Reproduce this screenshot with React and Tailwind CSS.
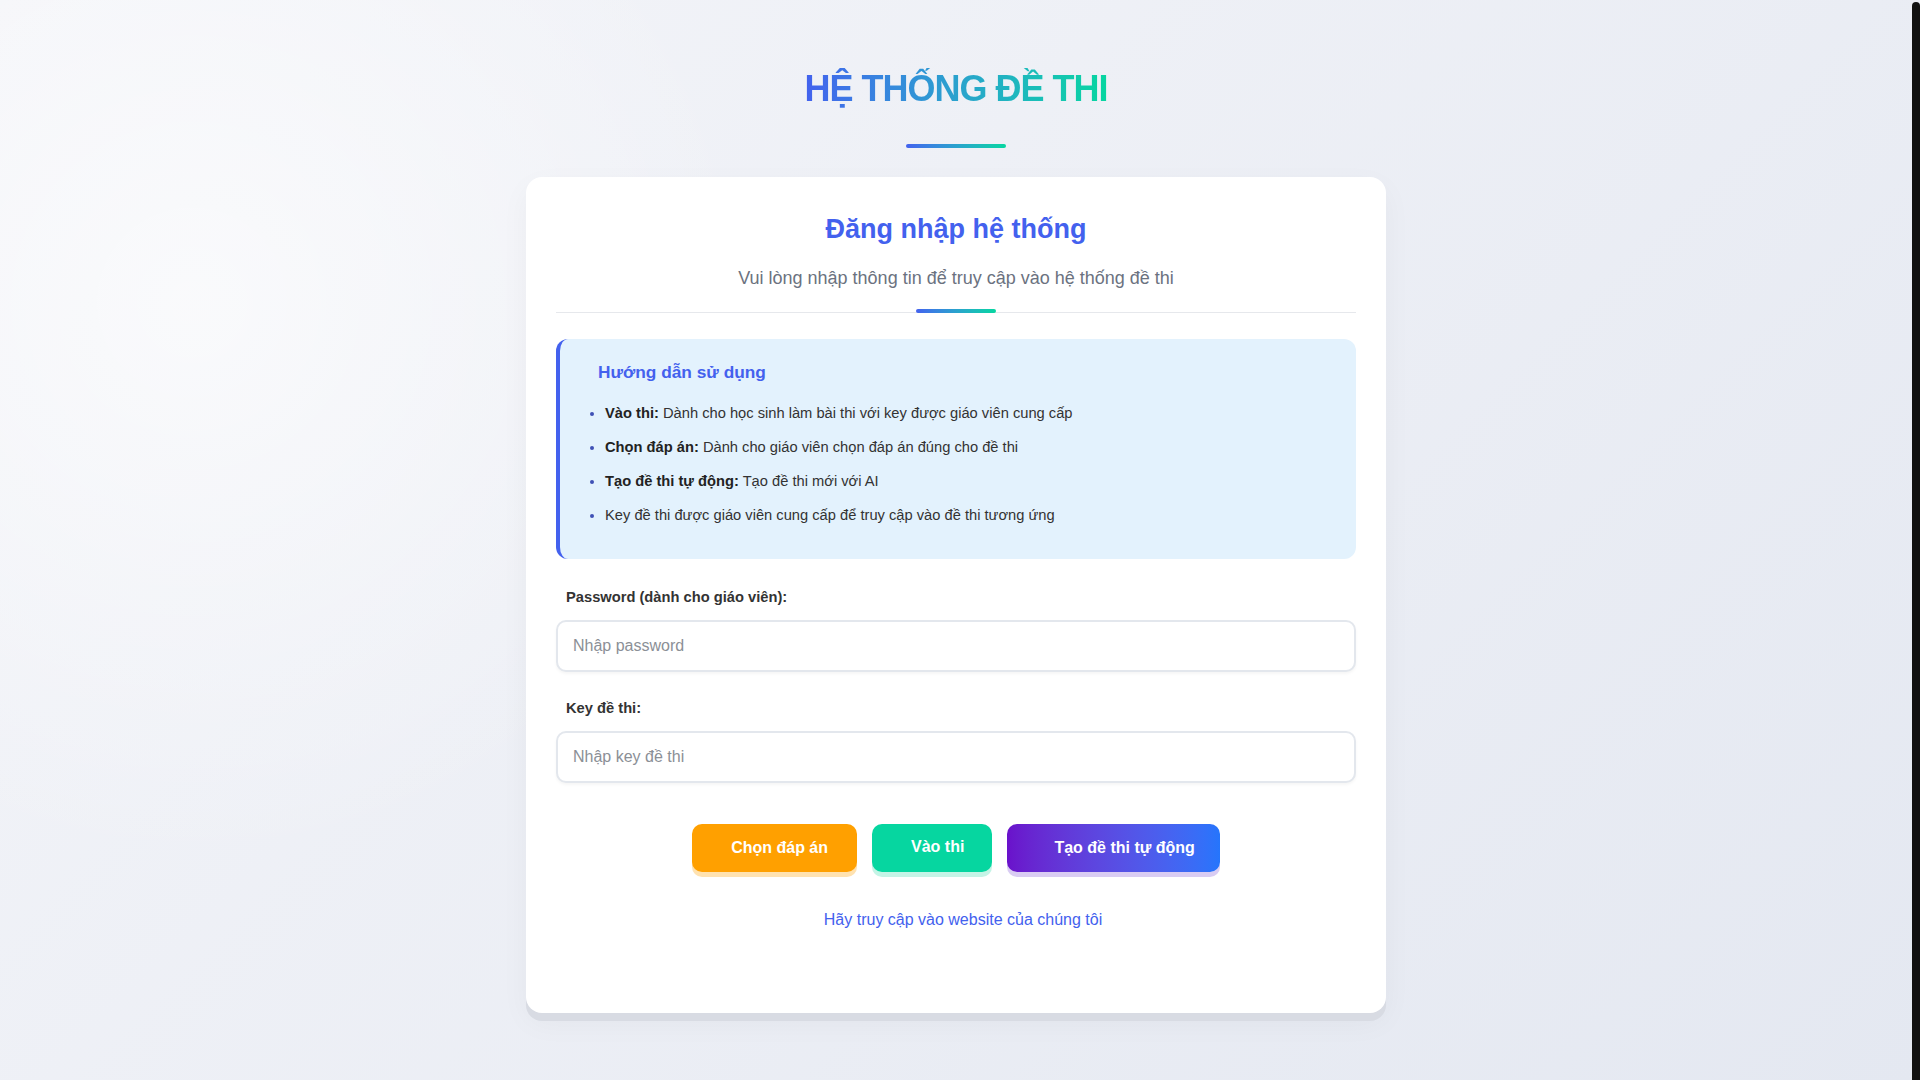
import { useState } from 'react'

const guide = [
  { b: 'Vào thi:', t: ' Dành cho học sinh làm bài thi với key được giáo viên cung cấp' },
  { b: 'Chọn đáp án:', t: ' Dành cho giáo viên chọn đáp án đúng cho đề thi' },
  { b: 'Tạo đề thi tự động:', t: ' Tạo đề thi mới với AI' },
  { b: '', t: 'Key đề thi được giáo viên cung cấp để truy cập vào đề thi tương ứng' },
]

const inputCls = 'w-full h-[52px] rounded-[10px] border-2 border-[#e3e7ed] bg-white px-[15px] text-[16px] text-[#333] placeholder:text-[#8b8f96] shadow-[0_2px_3px_rgba(0,0,0,0.04)] focus:outline-none focus:border-[#4361ee]'
const labelCls = 'block pl-[10px] text-[14.7px] leading-[20px] font-bold text-[#333]'

export default function App() {
  const [password, setPassword] = useState('')
  const [examKey, setExamKey] = useState('')

  return (
    <div className="flex min-h-screen font-['Liberation_Sans',Arial,sans-serif] bg-[radial-gradient(circle_at_10%_28%,rgba(255,255,255,0.6),transparent_30%),linear-gradient(135deg,#f4f5f9,#e4e8f1)]">
      <main className="flex-1 flex flex-col items-center pt-[68px] pb-[60px]">
        <h1 className="text-[36px] leading-[42px] font-bold tracking-[-1px] bg-linear-to-r from-[#4361ee] to-[#06d6a0] bg-clip-text text-transparent">
          HỆ THỐNG ĐỀ THI
        </h1>
        <div className="mt-[34px] h-1 w-[100px] rounded-full bg-linear-to-r from-[#4361ee] to-[#06d6a0]" />

        <div className="mt-[29px] w-[860px] rounded-2xl bg-white px-[30px] pt-[36px] pb-[83px] shadow-[0_8px_0_#d8dbe3,0_10px_30px_rgba(0,0,0,0.04)]">
          <h2 className="text-center text-[27px] leading-[32px] font-bold text-[#4361ee]">Đăng nhập hệ thống</h2>
          <p className="mt-[21px] text-center text-[18px] leading-[24px] text-[#6b7280]">
            Vui lòng nhập thông tin để truy cập vào hệ thống đề thi
          </p>
          <div className="mt-[19px] flex justify-center border-b border-[#e6e8ec]">
            <div className="-mb-px h-1 w-20 rounded-full bg-linear-to-r from-[#4361ee] to-[#06d6a0]" />
          </div>

          <div className="mt-[26px] rounded-xl border-l-4 border-[#4361ee] bg-[#e3f2fd] pl-[24px] pr-6 pt-[22px] pb-[33px]">
            <h3 className="ml-[14px] text-[17.3px] leading-[22px] font-bold text-[#4361ee]">Hướng dẫn sử dụng</h3>
            <ul className="mt-[19px] list-disc pl-[21px] space-y-[12px] marker:text-[#3f51b5]">
              {guide.map((g, i) => (
                <li key={i} className="text-[14.7px] leading-[22px] text-[#333]">
                  {g.b && <strong className="font-bold text-[#222]">{g.b}</strong>}
                  {g.t}
                </li>
              ))}
            </ul>
          </div>

          <div className="mt-[28px]">
            <label className={labelCls}>Password (dành cho giáo viên):</label>
            <input
              type="password"
              value={password}
              onChange={(e) => setPassword(e.target.value)}
              placeholder="Nhập password"
              className={`mt-[13px] ${inputCls}`}
            />
          </div>

          <div className="mt-[26px]">
            <label className={labelCls}>Key đề thi:</label>
            <input
              value={examKey}
              onChange={(e) => setExamKey(e.target.value)}
              placeholder="Nhập key đề thi"
              className={`mt-[13px] ${inputCls}`}
            />
          </div>

          <div className="mt-[41px] flex justify-center gap-[15px]">
            <button className="h-[48px] rounded-[10px] bg-[#ffa000] pl-[39px] pr-[29px] text-[16px] font-bold text-white shadow-[0_5px_0_#ffe2b0]">
              Chọn đáp án
            </button>
            <button className="h-[48px] rounded-[10px] bg-[#06d6a0] pl-[39px] pr-[28px] pb-[2px] text-[16px] font-bold text-white shadow-[0_5px_0_#c4f4e6]">
              Vào thi
            </button>
            <button className="h-[48px] rounded-[10px] bg-linear-to-r from-[#6a11cb] to-[#2575fc] pl-[47px] pr-[25px] text-[16px] font-bold text-white shadow-[0_5px_0_#d9ccf3]">
              Tạo đề thi tự động
            </button>
          </div>

          <div className="mt-[38px] flex justify-center pl-[14px]">
            <a href="#" className="text-[16px] leading-[20px] text-[#4361ee]">Hãy truy cập vào website của chúng tôi</a>
          </div>
        </div>
      </main>
      <div className="w-2 shrink-0 pt-[2px]">
        <div className="h-full rounded-t-sm bg-[#111]" />
      </div>
    </div>
  )
}
